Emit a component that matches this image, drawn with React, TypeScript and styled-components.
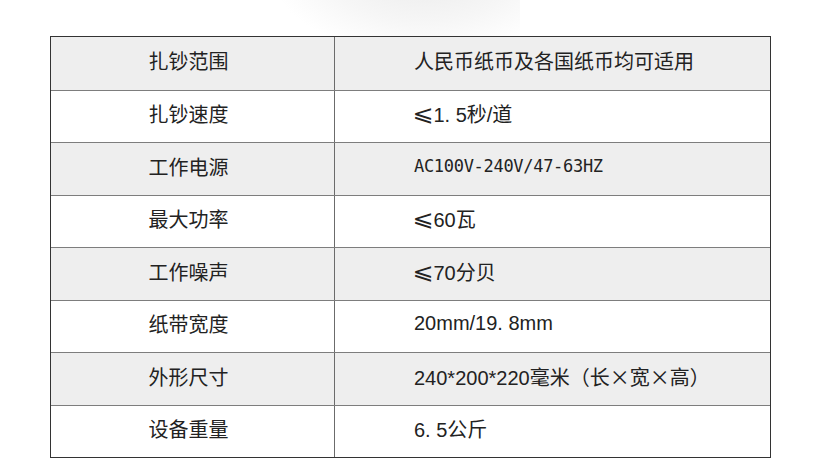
import { ReactNode } from 'react'
import styled, { createGlobalStyle } from 'styled-components'

const GlobalStyle = createGlobalStyle`
  html, body {
    margin: 0;
    padding: 0;
    background: #fff;
  }
  body {
    font-family: 'Liberation Sans', 'Noto Sans CJK SC', sans-serif;
    color: #222;
  }
`

const Sym = styled.span`
  font-family: 'DejaVu Sans', sans-serif;
  font-size: 22px;
  margin-right: 1px;
  transform: scaleX(1.15);
  display: inline-block;
`

const Cjk = styled.span`
  font-family: 'Noto Sans CJK SC', sans-serif;
`

type Spec = { label: string; value: ReactNode; mono?: boolean }

const Le = () => <Sym>⩽</Sym>

const specs: Spec[] = [
  { label: '扎钞范围', value: '人民币纸币及各国纸币均可适用' },
  { label: '扎钞速度', value: <><Le />1. 5秒/道</> },
  { label: '工作电源', value: 'AC100V-240V/47-63HZ', mono: true },
  { label: '最大功率', value: <><Le />60瓦</> },
  { label: '工作噪声', value: <><Le />70分贝</> },
  { label: '纸带宽度', value: '20mm/19. 8mm' },
  { label: '外形尺寸', value: <>240*200*220毫米<Cjk>（长×宽×高）</Cjk></> },
  { label: '设备重量', value: '6. 5公斤' },
]

const App = () => {
  return (
    <>
      <GlobalStyle />
      <Page>
        <Glow />
        <Table>
          {specs.map((s, i) => (
            <Row key={s.label} $shade={i % 2 === 0} $first={i === 0}>
              <Label>{s.label}</Label>
              <Value $mono={s.mono}>{s.value}</Value>
            </Row>
          ))}
        </Table>
      </Page>
    </>
  )
}

export default App

const Page = styled.div`
  position: relative;
  width: 815px;
  height: 475px;
  padding: 36px 0 0 50px;
  box-sizing: border-box;
  overflow: hidden;
`

const Glow = styled.div`
  position: absolute;
  left: 280px;
  top: -60px;
  width: 240px;
  height: 110px;
  background: radial-gradient(ellipse at 60% 30%, #ebebeb 0%, #f6f6f6 45%, rgba(255, 255, 255, 0) 75%);
  pointer-events: none;
`

const Table = styled.div`
  position: relative;
  width: 721px;
  border: 1px solid #333;
  box-sizing: border-box;
  background: #fff;
`

const Row = styled.div<{ $shade: boolean; $first: boolean }>`
  display: grid;
  grid-template-columns: 284px 1fr;
  height: 52.5px;
  box-sizing: border-box;
  background: ${(p) => (p.$shade ? '#eeeeee' : '#ffffff')};
  border-top: ${(p) => (p.$first ? 'none' : '1.5px solid #7d7d7d')};
`

const Label = styled.div`
  display: flex;
  align-items: center;
  justify-content: center;
  border-right: 1px solid #6b6b6b;
  font-family: 'Noto Sans CJK SC', sans-serif;
  font-size: 20px;
  padding-bottom: 5px;
  padding-right: 8px;
  box-sizing: border-box;
`

const Value = styled.div<{ $mono?: boolean }>`
  display: flex;
  align-items: center;
  padding-left: 79px;
  padding-bottom: 5px;
  box-sizing: border-box;
  font-family: ${(p) =>
    p.$mono
      ? "'DejaVu Sans Mono', monospace"
      : "'Liberation Sans', 'DejaVu Sans', 'Noto Sans CJK SC', sans-serif"};
  font-size: ${(p) => (p.$mono ? '17px' : '20px')};
  letter-spacing: ${(p) => (p.$mono ? '-0.3px' : '0')};
  white-space: pre;
`
